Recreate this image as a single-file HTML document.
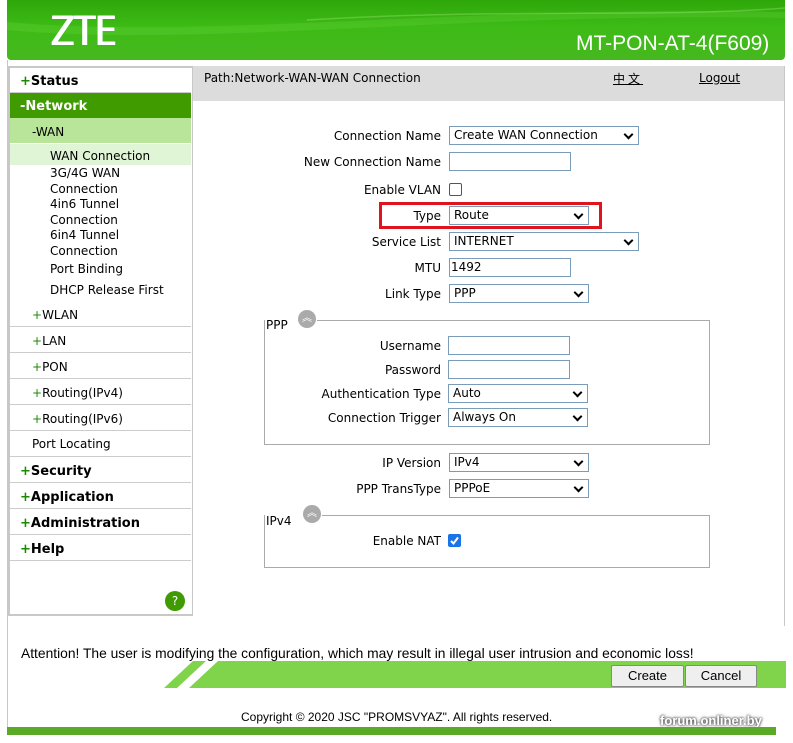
<!DOCTYPE html>
<html><head><meta charset="utf-8"><style>
*{margin:0;padding:0;box-sizing:border-box}
body{width:793px;height:743px;background:#fff;position:relative;overflow:hidden;font-family:"DejaVu Sans",Verdana,sans-serif;font-size:12px;color:#000}
.a{position:absolute}
.hdr{left:7px;top:0;width:778px;height:60px;background:linear-gradient(180deg,#2ea70a 0%,#3dbb16 45%,#46b81f 100%);border-radius:0 0 4px 4px;overflow:hidden}
.side{left:8px;top:66px;width:185px;height:550px;border:2px solid #c8c8c8;border-right:1px solid #c8c8c8}
.lbl{position:absolute;text-align:right;width:300px;line-height:18px}
.sel,.inp{position:absolute;height:19px;border:1px solid #7a9cb8;background:#fff;line-height:17px;padding-left:4px;font-size:12px}
.sel:after{content:"";position:absolute;right:6px;top:4px;width:5px;height:5px;border-right:2px solid #000;border-bottom:2px solid #000;transform:rotate(45deg)}
.mi{position:absolute;left:0;width:181px;border-bottom:1px solid #ccc}
.sub{position:absolute;left:40px;line-height:15.5px}
.pl{color:#1a8a00;font-weight:bold}
.ic{position:absolute;width:18px;height:18px;border-radius:50%;background:#aaa;color:#fff;font-size:10px;text-align:center;line-height:18px}
</style></head><body>
<div class="a hdr">
<svg width="778" height="60" style="position:absolute;left:0;top:0"><path d="M0,22 C200,40 450,5 778,12 L778,18 C450,12 200,48 0,30Z" fill="#7fe050" opacity=".2"/><path d="M300,20 C500,8 650,18 778,8" stroke="#b8f090" stroke-width="1.5" fill="none" opacity=".3"/></svg>
<div class="a" style="left:44px;top:9px;color:#fff;font-family:'DejaVu Sans',sans-serif;font-size:40px;transform:scaleX(.85);transform-origin:0 0;text-shadow:1px 0 0 #fff,-1px 0 0 #fff">ZTE</div>
<div class="a" style="left:569px;top:32px;color:#fff;font-family:'Liberation Sans',sans-serif;font-size:21px">MT-PON-AT-4(F609)</div>
</div>
<div class="a" style="left:7px;top:60px;width:1px;height:675px;background:#c8c8c8"></div>
<div class="a side">
<div class="mi" style="top:0;height:25px;font-weight:bold;font-size:13px;padding:6px 0 0 10px"><span class="pl">+</span>Status</div>
<div class="mi" style="top:25px;height:25px;background:#3f9b00;color:#fff;font-weight:bold;font-size:13px;padding:6px 0 0 10px;border:0">-Network</div>
<div class="mi" style="top:50px;height:25px;background:#b8e59a;padding:7px 0 0 22px;border:0">-WAN</div>
<div class="mi" style="top:76px;height:21px;background:#e0f5d5;padding:5px 0 0 40px;border:0">WAN Connection</div>
<div class="sub" style="top:98px">3G/4G WAN<br>Connection</div>
<div class="sub" style="top:129px">4in6 Tunnel<br>Connection</div>
<div class="sub" style="top:160px">6in4 Tunnel<br>Connection</div>
<div class="sub" style="top:194px">Port Binding</div>
<div class="sub" style="top:215px">DHCP Release First</div>
<div class="mi" style="top:233px;height:26px;padding:7px 0 0 22px"><span style="color:#1a8a00">+</span>WLAN</div>
<div class="mi" style="top:259px;height:26px;padding:7px 0 0 22px"><span style="color:#1a8a00">+</span>LAN</div>
<div class="mi" style="top:285px;height:26px;padding:7px 0 0 22px"><span style="color:#1a8a00">+</span>PON</div>
<div class="mi" style="top:311px;height:26px;padding:7px 0 0 22px"><span style="color:#1a8a00">+</span>Routing(IPv4)</div>
<div class="mi" style="top:337px;height:26px;padding:7px 0 0 22px"><span style="color:#1a8a00">+</span>Routing(IPv6)</div>
<div class="mi" style="top:363px;height:26px;padding:6px 0 0 22px">Port Locating</div>
<div class="mi" style="top:389px;height:26px;padding:7px 0 0 10px;font-weight:bold;font-size:13px"><span class="pl">+</span>Security</div>
<div class="mi" style="top:415px;height:26px;padding:7px 0 0 10px;font-weight:bold;font-size:13px"><span class="pl">+</span>Application</div>
<div class="mi" style="top:441px;height:26px;padding:7px 0 0 10px;font-weight:bold;font-size:13px"><span class="pl">+</span>Administration</div>
<div class="mi" style="top:467px;height:26px;padding:7px 0 0 10px;font-weight:bold;font-size:13px"><span class="pl">+</span>Help</div>
<div class="a" style="left:155px;top:523px;width:20px;height:20px;border-radius:50%;background:#3f9b00;color:#fff;text-align:center;line-height:20px;font-size:12px">?</div>
</div>
<div class="a" style="left:193px;top:66px;width:592px;height:35px;background:#dcdcdc"></div>
<div class="a" style="left:784px;top:66px;width:1px;height:560px;background:#c8c8c8"></div>
<div class="a" style="left:204px;top:71px">Path:Network-WAN-WAN Connection</div>
<div class="a" style="left:613px;top:70px;text-decoration:underline;font-family:'Noto Sans CJK SC',sans-serif;font-size:12px;letter-spacing:3px">中文</div>
<div class="a" style="left:699px;top:71px;text-decoration:underline">Logout</div>

<div class="lbl" style="left:141px;top:127px">Connection Name</div><div class="sel" style="left:449px;top:126px;width:190px">Create WAN Connection</div>
<div class="lbl" style="left:141px;top:153px">New Connection Name</div><div class="inp" style="left:449px;top:152px;width:122px"></div>
<div class="lbl" style="left:141px;top:181px">Enable VLAN</div><div class="a" style="left:449px;top:183px;width:13px;height:13px;border:1px solid #555;border-radius:2px"></div>
<div class="a" style="left:379px;top:202px;width:223px;height:27px;border:3px solid #e0141e"></div>
<div class="lbl" style="left:141px;top:207px">Type</div><div class="sel" style="left:449px;top:206px;width:140px">Route</div>
<div class="lbl" style="left:141px;top:233px">Service List</div><div class="sel" style="left:449px;top:232px;width:190px">INTERNET</div>
<div class="lbl" style="left:141px;top:259px">MTU</div><div class="inp" style="left:449px;top:258px;width:122px;padding-left:1px">1492</div>
<div class="lbl" style="left:141px;top:285px">Link Type</div><div class="sel" style="left:449px;top:284px;width:140px">PPP</div>

<div class="a" style="left:264px;top:320px;width:446px;height:125px;border:1px solid #aaa"></div>
<div class="a" style="left:265px;top:312px;width:52px;height:16px;background:#fff"></div>
<div class="a" style="left:266px;top:318px">PPP</div>
<div class="ic" style="left:298px;top:310px">︽</div>
<div class="lbl" style="left:141px;top:337px">Username</div><div class="inp" style="left:448px;top:336px;width:122px"></div>
<div class="lbl" style="left:141px;top:361px">Password</div><div class="inp" style="left:448px;top:360px;width:122px"></div>
<div class="lbl" style="left:141px;top:385px">Authentication Type</div><div class="sel" style="left:448px;top:384px;width:140px">Auto</div>
<div class="lbl" style="left:141px;top:409px">Connection Trigger</div><div class="sel" style="left:448px;top:408px;width:140px">Always On</div>

<div class="lbl" style="left:141px;top:454px">IP Version</div><div class="sel" style="left:449px;top:453px;width:140px">IPv4</div>
<div class="lbl" style="left:141px;top:480px">PPP TransType</div><div class="sel" style="left:449px;top:479px;width:140px">PPPoE</div>

<div class="a" style="left:264px;top:515px;width:446px;height:53px;border:1px solid #aaa"></div>
<div class="a" style="left:265px;top:507px;width:57px;height:16px;background:#fff"></div>
<div class="a" style="left:266px;top:514px">IPv4</div>
<div class="ic" style="left:303px;top:505px">︽</div>
<div class="lbl" style="left:141px;top:532px">Enable NAT</div>
<div class="a" style="left:448px;top:534px;width:13px;height:13px;background:#1a73e8;border-radius:2px"><svg width="13" height="13" style="position:absolute;left:0;top:0"><path d="M3,7 L5.5,9.5 L10,3.5" stroke="#fff" stroke-width="2" fill="none"/></svg></div>

<div class="a" style="left:21px;top:645px;font-family:'Liberation Sans',sans-serif;font-size:14px;transform:scaleX(0.987);transform-origin:0 0;white-space:nowrap">Attention! The user is modifying the configuration, which may result in illegal user intrusion and economic loss!</div>
<svg class="a" style="left:160px;top:661px" width="626" height="28"><path d="M4,27 L33,0 L46,0 L17,27Z" fill="#80d44c"/><path d="M29,27 L58,0 L626,0 L626,27Z" fill="#80d44c"/></svg>
<div class="a" style="left:611px;top:665px;width:73px;height:22px;border:1px solid #888;background:#efefef;border-radius:2px;text-align:center;line-height:20px;font-family:'Liberation Sans',sans-serif;font-size:13px">Create</div>
<div class="a" style="left:685px;top:665px;width:72px;height:22px;border:1px solid #888;background:#efefef;border-radius:2px;text-align:center;line-height:20px;font-family:'Liberation Sans',sans-serif;font-size:13px">Cancel</div>
<div class="a" style="left:241px;top:710px;font-family:'Liberation Sans',sans-serif;font-size:12px">Copyright © 2020 JSC "PROMSVYAZ". All rights reserved.</div>
<div class="a" style="left:660px;top:713px;color:#fff;font-family:'Liberation Sans',sans-serif;font-weight:bold;font-size:13px;text-shadow:0 0 3px #444,0 0 2px #444">forum.onliner.by</div>
<div class="a" style="left:7px;top:727px;width:769px;height:8px;background:#5aaa28"></div>
</body></html>
